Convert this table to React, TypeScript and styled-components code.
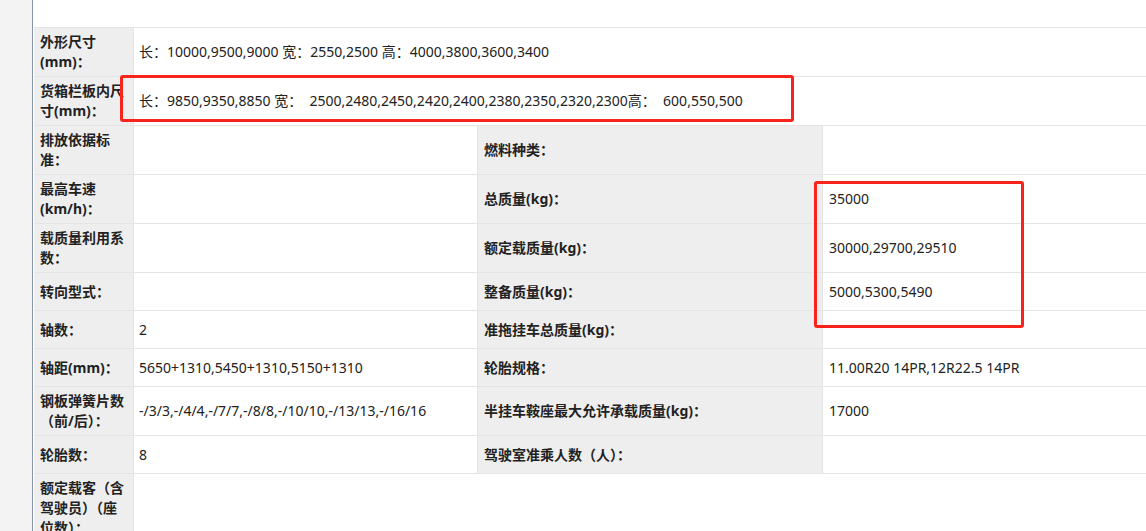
import React from 'react';
import styled, { createGlobalStyle } from 'styled-components';

const GlobalStyle = createGlobalStyle`
  html, body {
    margin: 0;
    padding: 0;
    background: #fff;
    overflow: hidden;
  }
  body {
    font-family: "Noto Sans", "Noto Sans CJK SC", sans-serif;
    font-size: 14px;
    color: #222;
  }
`;

const Page = styled.div`
  position: relative;
  display: flex;
  width: 1146px;
  height: 531px;
  overflow: hidden;
`;

const SideStrip = styled.aside`
  flex: 0 0 32px;
  background: #f3f3f3;
  border-right: 1px solid #8796aa;
`;

const Main = styled.main`
  flex: 1;
  padding: 27px 0 0 1px;
  overflow: hidden;
`;

const SpecGrid = styled.div`
  display: grid;
  grid-template-columns: 100px 344px 345px 400px;
  width: 1189px;
  border-top: 1px solid #e4e4e4;
`;

const Cell = styled.div<{ $span?: number; $pad?: number }>`
  box-sizing: border-box;
  min-height: 38px;
  display: flex;
  align-items: center;
  padding: 4px 6px 4px ${p => p.$pad ?? 6}px;
  line-height: 20px;
  border-right: 1px solid #e4e4e4;
  border-bottom: 1px solid #e4e4e4;
  grid-column: span ${p => p.$span ?? 1};
`;

const LabelCell = styled(Cell)`
  background: #eeeeee;
  font-weight: 700;
  color: #222;
`;

const ValueCell = styled(Cell)`
  background: #fff;
  white-space: pre-wrap;
`;

const Mark = styled.div<{ $x: number; $y: number; $w: number; $h: number }>`
  position: absolute;
  left: ${p => p.$x}px;
  top: ${p => p.$y}px;
  width: ${p => p.$w}px;
  height: ${p => p.$h}px;
  box-sizing: border-box;
  border: 3px solid #f8231b;
  border-radius: 3px;
  pointer-events: none;
`;

type Pair = [string, string];

const wide: Pair[] = [
  ['外形尺寸(mm)：', '长：10000,9500,9000 宽：2550,2500 高：4000,3800,3600,3400'],
  ['货箱栏板内尺寸(mm)：', '长：9850,9350,8850 宽：  2500,2480,2450,2420,2400,2380,2350,2320,2300高：  600,550,500'],
];

const pairs: [Pair, Pair][] = [
  [['排放依据标准：', ''], ['燃料种类：', '']],
  [['最高车速(km/h)：', ''], ['总质量(kg)：', '35000']],
  [['载质量利用系数：', ''], ['额定载质量(kg)：', '30000,29700,29510']],
  [['转向型式：', ''], ['整备质量(kg)：', '5000,5300,5490']],
  [['轴数：', '2'], ['准拖挂车总质量(kg)：', '']],
  [['轴距(mm)：', '5650+1310,5450+1310,5150+1310'], ['轮胎规格：', '11.00R20 14PR,12R22.5 14PR']],
  [['钢板弹簧片数（前/后）：', '-/3/3,-/4/4,-/7/7,-/8/8,-/10/10,-/13/13,-/16/16'], ['半挂车鞍座最大允许承载质量(kg)：', '17000']],
  [['轮胎数：', '8'], ['驾驶室准乘人数（人）：', '']],
];

export default function App() {
  return (
    <Page>
      <GlobalStyle />
      <SideStrip />
      <Main>
        <SpecGrid>
          {wide.map(([label, value]) => (
            <React.Fragment key={label}>
              <LabelCell>{label}</LabelCell>
              <ValueCell $span={3} $pad={5}>{value}</ValueCell>
            </React.Fragment>
          ))}
          {pairs.map(([left, right]) => (
            <React.Fragment key={left[0]}>
              <LabelCell>{left[0]}</LabelCell>
              <ValueCell $pad={5}>{left[1]}</ValueCell>
              <LabelCell>{right[0]}</LabelCell>
              <ValueCell>{right[1]}</ValueCell>
            </React.Fragment>
          ))}
          <LabelCell>额定载客（含驾驶员）（座位数）：</LabelCell>
          <ValueCell $span={3} $pad={5} />
        </SpecGrid>
      </Main>
      <Mark $x={120} $y={75} $w={674} $h={47} />
      <Mark $x={814} $y={181} $w={210} $h={147} />
    </Page>
  );
}
